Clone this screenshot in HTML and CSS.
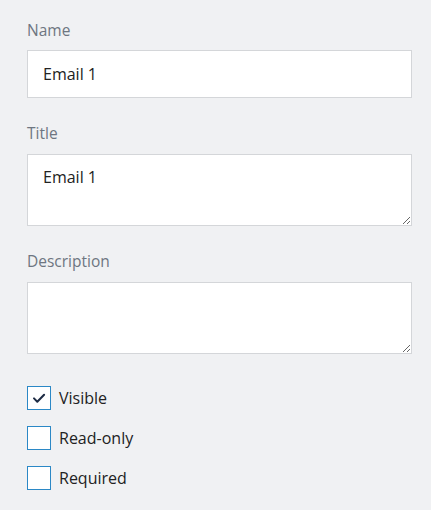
FILE: index.html
```html
<!DOCTYPE html>
<html lang="en">
<head>
  <meta charset="UTF-8" />
  <meta name="viewport" content="width=device-width, initial-scale=1.0"/>
  <title>Field properties</title>
  <link rel="stylesheet" href="styles.css">
</head>
<body>

  <form class="props">
    <div class="field">
      <label for="name">Name</label>
      <input type="text" id="name" value="Email 1" />
    </div>

    <div class="field">
      <label for="title">Title</label>
      <textarea id="title">Email 1</textarea>
    </div>

    <div class="field">
      <label for="desc">Description</label>
      <textarea id="desc"></textarea>
    </div>

    <div class="checks">
      <label class="check">
        <input type="checkbox" checked />
        <span class="box">
          <svg viewBox="0 0 24 24" width="24" height="24"><path d="M7 12.4l3.3 3.3 6.8-7" fill="none" stroke="#1d2b44" stroke-width="2" stroke-linecap="round" stroke-linejoin="round"/></svg>
        </span>
        Visible
      </label>
      <label class="check">
        <input type="checkbox" />
        <span class="box"></span>
        Read-only
      </label>
      <label class="check">
        <input type="checkbox" />
        <span class="box"></span>
        Required
      </label>
    </div>
  </form>

</body>
</html>
```

FILE: styles.css
```css
body {
  margin: 0;
  background: #f0f1f3;
  font-family: "Open Sans", Arial, sans-serif;
  color: #222;
}
.props {
  padding: 18px 20px 0 27px;
}
.field {
  display: flex;
  flex-direction: column;
  margin-bottom: 23px;
}
.field label {
  font-size: 15.5px;
  color: #6e7681;
  line-height: 24px;
  margin-bottom: 8px;
}
input[type="text"],
textarea {
  box-sizing: border-box;
  width: 385px;
  border: 1px solid #d4d6d9;
  background: #fff;
  font-family: inherit;
  font-size: 16px;
  color: #222;
  padding: 0 15px;
  margin: 0;
  outline: none;
}
input[type="text"] {
  height: 48px;
}
textarea {
  height: 72px;
  margin-top: 1px;
  padding-top: 11px;
  line-height: 22px;
  resize: vertical;
}
.checks {
  display: flex;
  flex-direction: column;
  gap: 16px;
  margin-top: 32px;
}
.check {
  display: flex;
  align-items: center;
  gap: 8px;
  font-size: 16px;
  line-height: 24px;
  color: #222;
}
.check input {
  display: none;
}
.box {
  box-sizing: border-box;
  width: 24px;
  height: 24px;
  border: 1px solid #2b88c6;
  background: #fff;
  display: flex;
}
.box svg {
  margin: -1px;
}
```
